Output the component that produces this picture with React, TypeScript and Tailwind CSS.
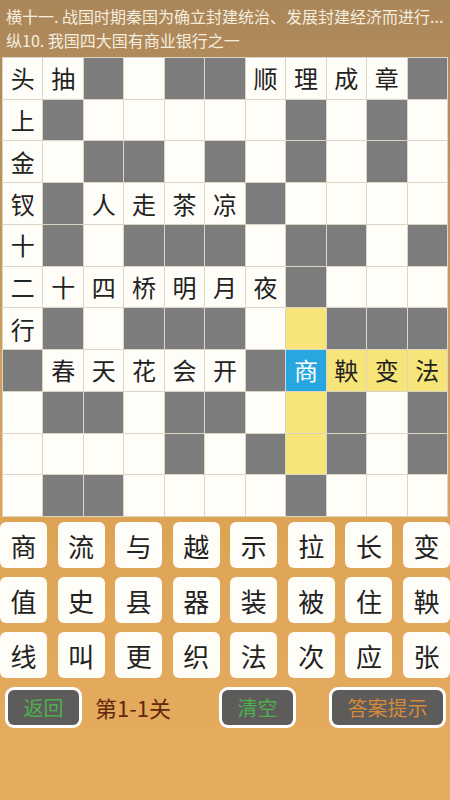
import React from 'react'

// grid legend: '.' empty white, '#' dark, 'y' yellow, otherwise character
const rows: string[][] = [
  ['头', '抽', '#', '.', '#', '#', '顺', '理', '成', '章', '#'],
  ['上', '#', '.', '.', '.', '.', '.', '#', '.', '#', '.'],
  ['金', '.', '#', '#', '.', '#', '.', '#', '.', '#', '.'],
  ['钗', '#', '人', '走', '茶', '凉', '#', '.', '.', '.', '.'],
  ['十', '#', '.', '#', '#', '#', '.', '#', '#', '.', '#'],
  ['二', '十', '四', '桥', '明', '月', '夜', '#', '.', '.', '.'],
  ['行', '#', '.', '#', '#', '#', '.', 'y', '#', '#', '#'],
  ['#', '春', '天', '花', '会', '开', '#', 'B商', 'Y鞅', 'Y变', 'Y法'],
  ['.', '#', '#', '.', '#', '#', '.', 'y', '#', '.', '#'],
  ['.', '.', '.', '.', '#', '.', '#', 'y', '#', '.', '#'],
  ['.', '#', '#', '.', '.', '.', '.', '#', '.', '.', '.'],
]

const keys = [
  '商', '流', '与', '越', '示', '拉', '长', '变',
  '值', '史', '县', '器', '装', '被', '住', '鞅',
  '线', '叫', '更', '织', '法', '次', '应', '张',
]

function Cell({ v }: { v: string }) {
  if (v === '#') return <div className="bg-[#7c7c7c]" />
  if (v === '.') return <div className="bg-[#fffdf7]" />
  if (v === 'y') return <div className="bg-[#f8e57a]" />
  if (v.startsWith('B'))
    return (
      <div className="bg-[#27a6df] flex items-center justify-center text-white text-[24px]">
        {v.slice(1)}
      </div>
    )
  if (v.startsWith('Y'))
    return (
      <div className="bg-[#f8e57a] flex items-center justify-center text-[#222] text-[24px]">
        {v.slice(1)}
      </div>
    )
  return (
    <div className="bg-[#fffdf7] flex items-center justify-center text-[#222] text-[24px]">{v}</div>
  )
}

function Btn({ label, color, w }: { label: string; color: string; w: string }) {
  return (
    <div className={`h-[41px] ${w} rounded-[9px] bg-white p-[3px]`}>
      <div
        className={`h-full w-full rounded-[6px] bg-[#5e5c5a] flex items-center justify-center text-[20px] ${color}`}
      >
        {label}
      </div>
    </div>
  )
}

export default function App() {
  return (
    <div
      className="w-[450px] h-[800px] overflow-hidden bg-[linear-gradient(180deg,#ab865a_0%,#c59a5d_35%,#dea456_65%,#e6ac60_100%)]"
      style={{ fontFamily: '"Noto Sans CJK SC", "Noto Sans", sans-serif' }}
    >
      {/* Clues */}
      <div className="px-[6px] pt-[4px] text-[16px] leading-[24px] text-[#f5eedf]">
        <div className="whitespace-nowrap overflow-hidden">横十一. 战国时期秦国为确立封建统治、发展封建经济而进行...</div>
        <div className="whitespace-nowrap">纵10. 我国四大国有商业银行之一</div>
      </div>

      {/* Board */}
      <div className="mx-[2px] mt-[5px] h-[460px] grid grid-cols-11 grid-rows-11 gap-px bg-[#dcd5c5] border border-[#dcd5c5]">
        {rows.flatMap((r, i) => r.map((v, j) => <Cell key={`${i}-${j}`} v={v} />))}
      </div>

      {/* Candidate characters */}
      <div className="mt-[5px] grid grid-cols-8 gap-x-[10.5px] gap-y-[9px]">
        {keys.map((k, i) => (
          <div
            key={i}
            className="h-[46px] rounded-[6px] bg-[#fffdf8] flex items-center justify-center text-[26px] text-[#222]"
          >
            {k}
          </div>
        ))}
      </div>

      {/* Controls */}
      <div className="mt-[9px] flex items-center pl-[5px]">
        <Btn label="返回" color="text-[#4cb04f]" w="w-[77px]" />
        <div className="ml-[13px] w-[124px] text-[22px] text-[#62270c]">第1-1关</div>
        <Btn label="清空" color="text-[#4cb04f]" w="w-[77px]" />
        <div className="ml-[33px]">
          <Btn label="答案提示" color="text-[#d48a3a]" w="w-[117px]" />
        </div>
      </div>
    </div>
  )
}
